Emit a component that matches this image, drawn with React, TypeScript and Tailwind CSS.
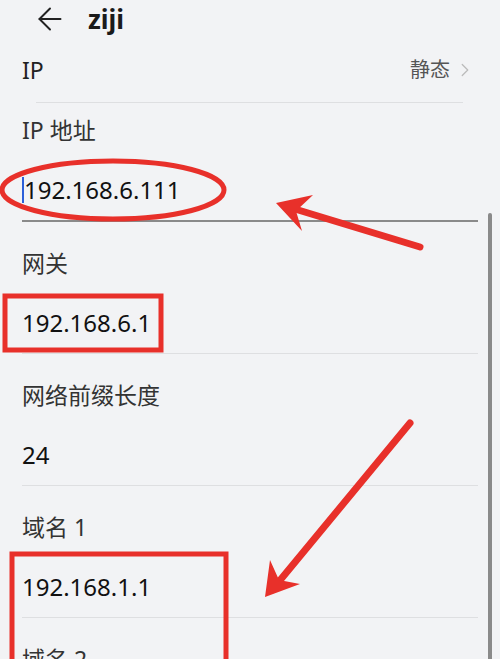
import { ArrowLeft, ChevronRight } from "lucide-react"

const FONT = { fontFamily: '"Noto Sans", "Noto Sans CJK SC", sans-serif' }

type Field = { label: string; value: string }

const FIELDS: Field[] = [
  { label: "网关", value: "192.168.6.1" },
  { label: "网络前缀长度", value: "24" },
  { label: "域名 1", value: "192.168.1.1" },
  { label: "域名 2", value: "" }
]

function FieldRow({ label, value }: Field) {
  return (
    <div className="ml-[22px] mr-[22px] border-b border-[#dedfe1] pt-[25px] pb-[14px]">
      <p className="text-[23px] leading-[32px] text-[#333]">{label}</p>
      <p className="mt-[28px] text-[24px] leading-[32px] text-[#111]">{value}</p>
    </div>
  )
}

function Annotations() {
  return (
    <svg
      className="pointer-events-none absolute left-0 top-0"
      width="500"
      height="659"
      viewBox="0 0 500 659"
    >
      <g fill="none" stroke="#e8302a" strokeWidth="5">
        <ellipse cx="113" cy="190" rx="111" ry="29" />
        <rect x="5" y="296" width="156" height="54" />
        <rect x="12" y="554" width="214" height="120" />
      </g>
      <g stroke="#e8302a" strokeWidth="7" strokeLinecap="round">
        <line x1="420" y1="247" x2="285" y2="206" />
        <line x1="410" y1="423" x2="272" y2="590" />
      </g>
      <g fill="#e8302a">
        <polygon points="276,203 313,195 296,211 302,231" />
        <polygon points="265,597 270,560 279,580 300,584" />
      </g>
    </svg>
  )
}

export default function App() {
  return (
    <div className="relative h-[659px] w-[500px] overflow-hidden bg-[#f2f3f5]" style={FONT}>
      <header className="flex h-[38px] items-center pl-[32px]">
        <ArrowLeft className="h-[36px] w-[36px] text-[#222]" strokeWidth={1.3} />
        <h1 className="ml-[20px] text-[26px] font-bold leading-none text-[#1a1a1a]">ziji</h1>
      </header>

      <div className="flex h-[64px] items-center justify-between pl-[22px] pr-[24px]">
        <span className="text-[23px] text-[#222]">IP</span>
        <span className="flex items-center text-[20px] text-[#555]">
          静态
          <ChevronRight className="ml-[4px] h-[28px] w-[22px] text-[#bbb]" strokeWidth={1.4} />
        </span>
      </div>
      <div className="ml-[36px] mr-[37px] h-px bg-[#dedfe1]" />

      <div className="ml-[22px] mr-[22px] pt-[11px]">
        <p className="text-[23px] leading-[32px] text-[#333]">IP 地址</p>
        <div className="mt-[28px] flex items-center border-b-2 border-[#8a8a8a] pb-[14px]">
          <span className="h-[26px] w-[2px] bg-[#2b5fd9]" />
          <span className="text-[24px] leading-[32px] text-[#111]">192.168.6.111</span>
        </div>
      </div>

      {FIELDS.map((f) => (
        <FieldRow key={f.label} {...f} />
      ))}

      <div className="absolute right-[8px] top-[213px] h-[460px] w-[4px] rounded-full bg-[#8a8a8a]" />
      <Annotations />
    </div>
  )
}
